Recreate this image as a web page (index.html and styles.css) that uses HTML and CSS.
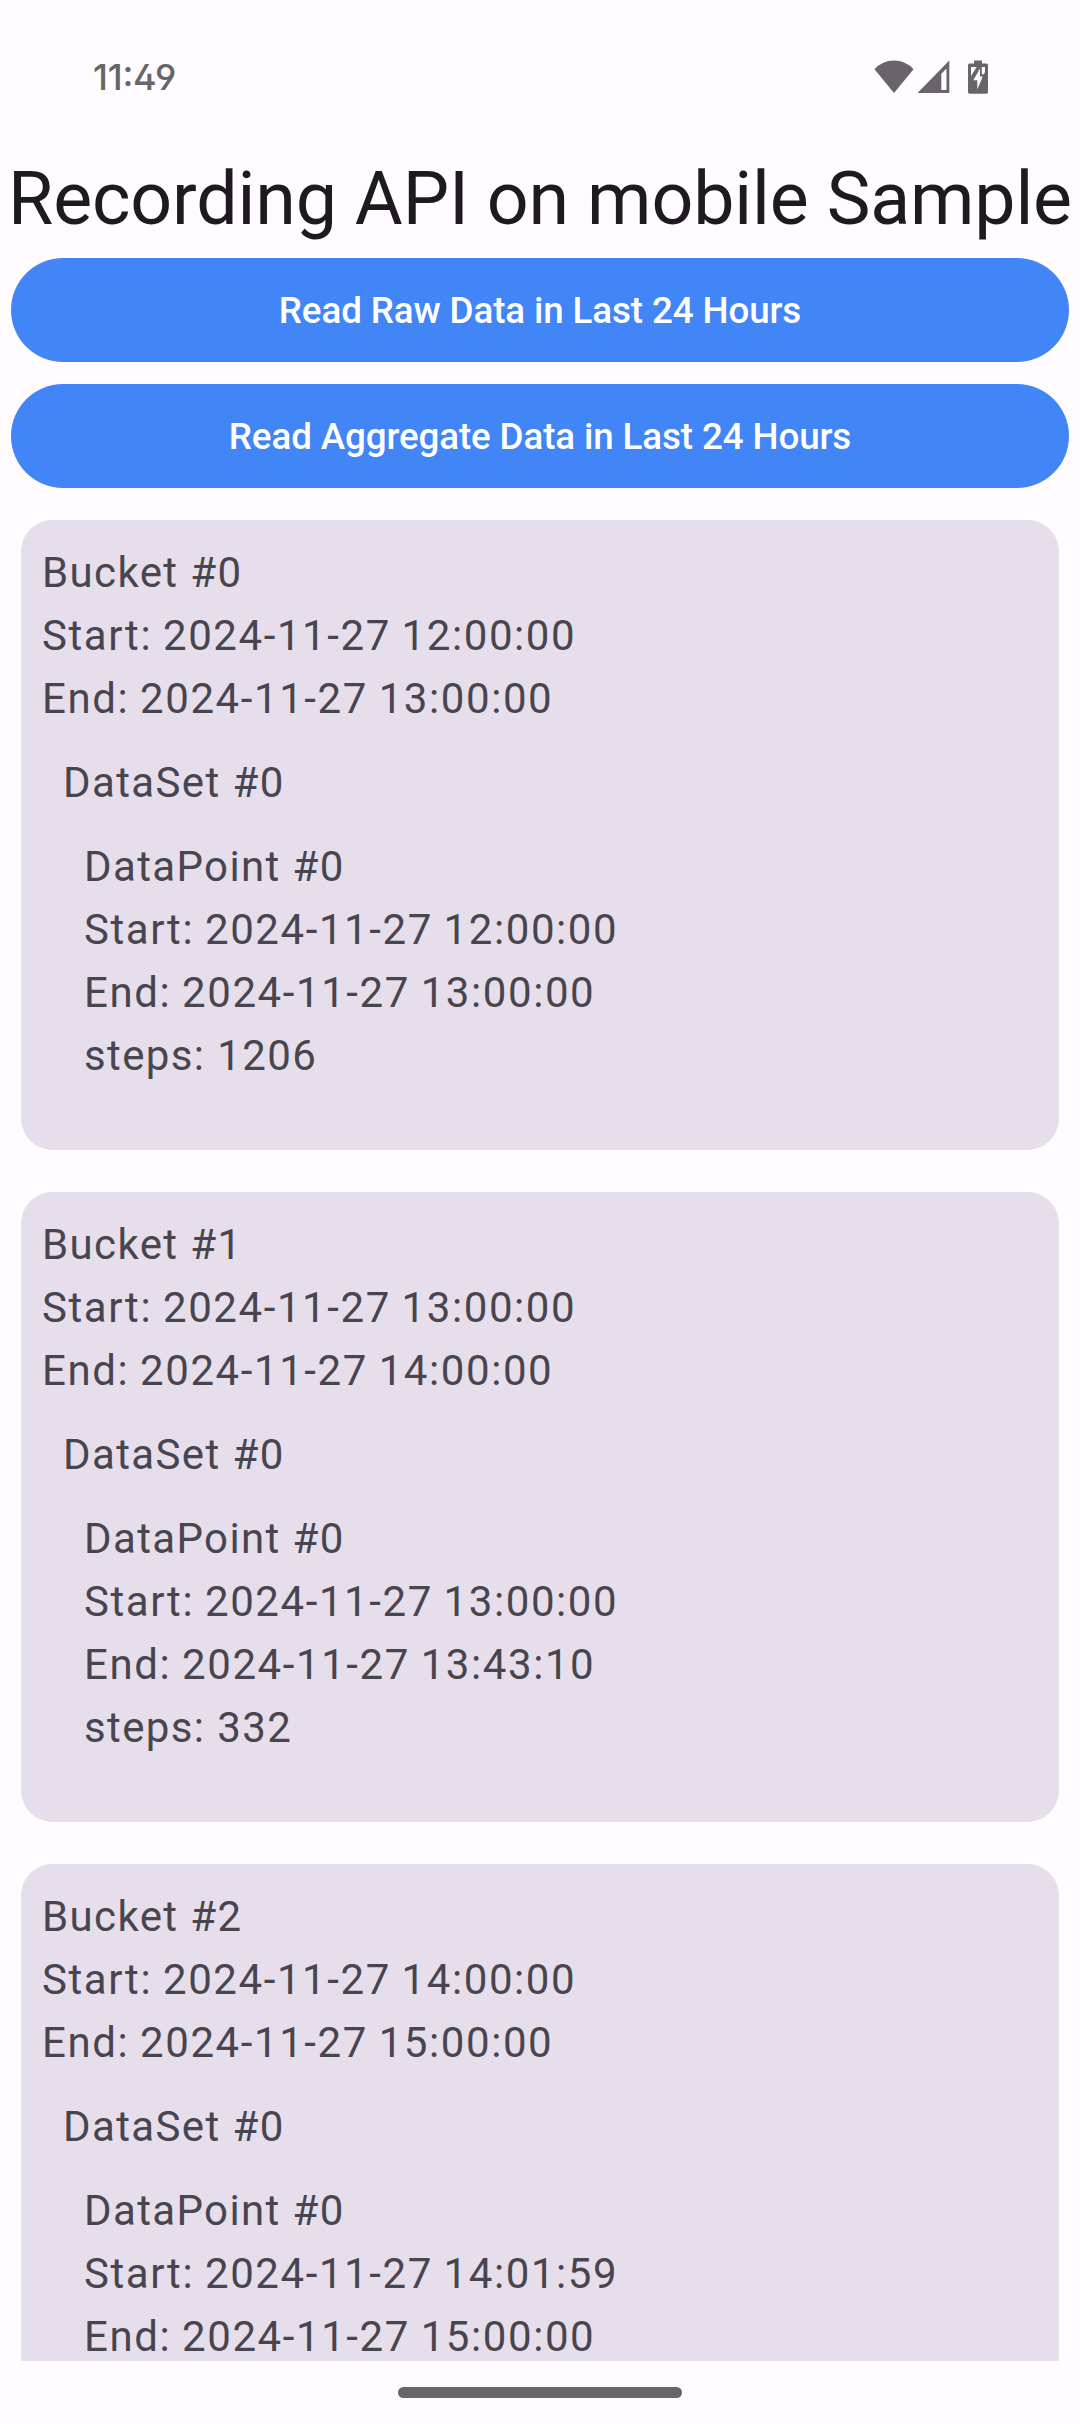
FILE: index.html
```html
<!DOCTYPE html>
<html lang="en">
<head>
<meta charset="utf-8">
<title>Recording API on mobile Sample</title>
<link rel="stylesheet" href="styles.css">
</head>
<body>
<div class="screen">
  <header class="status">
    <span class="clock">11:49</span>
    <span class="icons">
      <svg class="wifi" width="40" height="34" viewBox="0 0 40 34"><path d="M.5 9.200C6 3.500 12.500.6 20 .6S34 3.500 39.500 9.200L20 33Z"/></svg>
      <svg class="signal" width="33" height="34" viewBox="0 0 33 34"><path fill-rule="evenodd" d="M32.300.5V33H.5ZM29.500 8.500 24.300 13.800V30H29.500Z"/></svg>
      <svg class="battery" width="20" height="34" viewBox="0 0 20 34"><path fill-rule="evenodd" d="M6 .5h8v3h4.500q1.500 0 1.500 1.500v27q0 1.700-1.700 1.700H1.700Q0 33.700 0 32V5q0-1.500 1.500-1.500H6ZM3 7v9L8.700 7ZM12 8.500 5.300 20.200h4V29.500L14.700 16.500H12ZM13.800 7v7.200H15.800L17 12V7Z"/></svg>
    </span>
  </header>
  <h1 class="title">Recording API on mobile Sample</h1>
  <div class="actions">
    <button class="btn">Read Raw Data in Last 24 Hours</button>
    <button class="btn">Read Aggregate Data in Last 24 Hours</button>
  </div>
  <main class="list">
    <section class="card">
      <p>Bucket #0</p>
      <p class="time">Start: 2024-11-27 12:00:00</p>
      <p class="time">End: 2024-11-27 13:00:00</p>
      <div class="nested">
        <p>DataSet #0</p>
        <div class="nested">
          <p>DataPoint #0</p>
          <p class="time">Start: 2024-11-27 12:00:00</p>
          <p class="time">End: 2024-11-27 13:00:00</p>
          <p>steps: 1206</p>
        </div>
      </div>
    </section>
    <section class="card">
      <p>Bucket #1</p>
      <p class="time">Start: 2024-11-27 13:00:00</p>
      <p class="time">End: 2024-11-27 14:00:00</p>
      <div class="nested">
        <p>DataSet #0</p>
        <div class="nested">
          <p>DataPoint #0</p>
          <p class="time">Start: 2024-11-27 13:00:00</p>
          <p class="time">End: 2024-11-27 13:43:10</p>
          <p>steps: 332</p>
        </div>
      </div>
    </section>
    <section class="card">
      <p>Bucket #2</p>
      <p class="time">Start: 2024-11-27 14:00:00</p>
      <p class="time">End: 2024-11-27 15:00:00</p>
      <div class="nested">
        <p>DataSet #0</p>
        <div class="nested">
          <p>DataPoint #0</p>
          <p class="time">Start: 2024-11-27 14:01:59</p>
          <p class="time">End: 2024-11-27 15:00:00</p>
        </div>
      </div>
    </section>
  </main>
  <footer class="navbar"><span class="handle"></span></footer>
</div>
</body>
</html>
```
FILE: styles.css
```css
* { box-sizing: border-box; }
html, body { margin: 0; height: 100%; }
body {
  background: #fffbff;
  font-family: Roboto, "Liberation Sans", sans-serif;
  overflow: hidden;
}
.screen {
  width: 1080px;
  height: 2424px;
  display: flex;
  flex-direction: column;
}
.status {
  height: 154px;
  flex: none;
  padding: 0 92px 0 93px;
  display: flex;
  justify-content: space-between;
  color: #676568;
}
.clock {
  font: 500 36px/44px Inter, Roboto, sans-serif;
  font-feature-settings: "ss01", "calt";
  letter-spacing: -0.25px;
  margin-top: 55px;
}
.icons {
  display: flex;
  margin-top: 60px;
}
.icons svg { fill: #676568; display: block; }
.signal { margin-left: 3px; }
.battery { margin-left: 18px; }
.title {
  margin: 0;
  height: 104px;
  flex: none;
  font-size: 73.5px;
  line-height: 91px;
  font-weight: 400;
  letter-spacing: -0.15px;
  text-align: center;
  white-space: nowrap;
  color: #1c1b1e;
}
.actions {
  flex: none;
  padding: 0 11px;
  display: flex;
  flex-direction: column;
  gap: 22px;
}
.btn {
  height: 104px;
  padding: 2px 0 0;
  border: 0;
  border-radius: 52px;
  background: #4285f6;
  color: #fff;
  font: 500 36.75px/52px Roboto, "Liberation Sans", sans-serif;
  letter-spacing: -0.12px;
}
.list {
  height: 1873px;
  flex: none;
  padding: 32px 21px 0;
  display: flex;
  flex-direction: column;
  gap: 42px;
  overflow: hidden;
}
.card {
  height: 630px;
  flex: none;
  padding: 21px;
  border-radius: 31.5px;
  background: #e6dfeb;
  color: #49454e;
  font-size: 42px;
  line-height: 63px;
  letter-spacing: 1.38px;
}
.card p { margin: 0; }
.card .time {
  letter-spacing: 1.58px;
  word-spacing: -1.2px;
}
.nested { padding: 21px 0 0 21px; }
.navbar {
  flex: 1;
  display: flex;
  justify-content: center;
  padding-top: 26px;
}
.handle {
  width: 284px;
  height: 11px;
  border-radius: 5.5px;
  background: #676568;
}
```
